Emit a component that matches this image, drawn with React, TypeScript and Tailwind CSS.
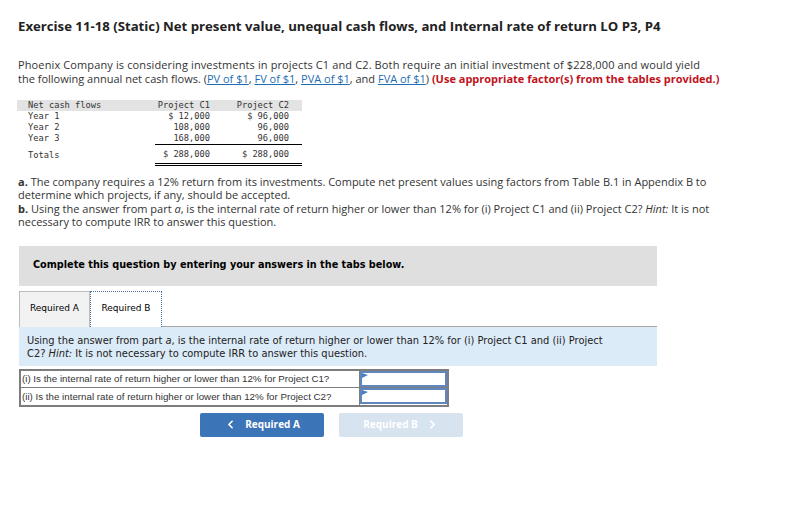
import { ChevronLeft, ChevronRight } from 'lucide-react';

const rows = [
  { label: 'Year 1', c1: '$ 12,000', c2: '$ 96,000' },
  { label: 'Year 2', c1: '108,000', c2: '96,000' },
  { label: 'Year 3', c1: '168,000', c2: '96,000' },
];

const questions = [
  '(i) Is the internal rate of return higher or lower than 12% for Project C1?',
  '(ii) Is the internal rate of return higher or lower than 12% for Project C2?',
];

function Link({ children }: { children: React.ReactNode }) {
  return <span className="text-[#1f6db3] underline">{children}</span>;
}

export default function App() {
  return (
    <div className="w-[801px] h-[517px] bg-white text-[#333] font-['Open_Sans',sans-serif] overflow-hidden">
      <div className="pl-[18px] pt-[16px]">
        <h1 className="text-[13.2px] font-bold text-[#222] leading-[20px] whitespace-nowrap">
          Exercise 11-18 (Static) Net present value, unequal cash flows, and Internal rate of return LO P3, P4
        </h1>

        <p className="mt-[22px] text-[11px] leading-[13.5px] whitespace-nowrap">
          <span className="tracking-[0.12px]">
            Phoenix Company is considering investments in projects C1 and C2. Both require an initial investment of $228,000 and would yield
          </span>
          <br />
          the following annual net cash flows. (<Link>PV of $1</Link>, <Link>FV of $1</Link>, <Link>PVA of $1</Link>, and{' '}
          <Link>FVA of $1</Link>) <span className="font-bold text-[#c0121b]">(Use appropriate factor(s) from the tables provided.)</span>
        </p>

        <table className="mt-[15px] -ml-px font-['DejaVu_Sans_Mono',monospace] text-[8.7px] leading-[11px] text-[#333] border-collapse">
          <thead>
            <tr className="bg-[#e3e3e3]">
              <th className="w-[138px] pl-[11px] text-left font-normal">Net cash flows</th>
              <th className="w-[57px] text-right font-normal pr-[2px]">Project C1</th>
              <th className="w-[20px]"></th>
              <th className="w-[70px] pr-[13px] text-right font-normal">Project C2</th>
            </tr>
          </thead>
          <tbody>
            {rows.map((r, i) => (
              <tr key={r.label}>
                <td className="pl-[11px]">{r.label}</td>
                <td className={`text-right pr-[2px] ${i === 2 ? 'border-b border-black' : ''}`}>{r.c1}</td>
                <td className={i === 2 ? 'border-b border-black' : ''}></td>
                <td className={`text-right pr-[13px] ${i === 2 ? 'border-b border-black' : ''}`}>{r.c2}</td>
              </tr>
            ))}
            <tr>
              <td className="pl-[11px] pt-[4px] pb-[3px]">Totals</td>
              <td className="text-right pr-[2px] pt-[4px] pb-[3px] border-b-[3px] border-double border-black">$ 288,000</td>
              <td className="border-b-[3px] border-double border-black"></td>
              <td className="text-right pr-[13px] pt-[4px] pb-[3px] border-b-[3px] border-double border-black">$ 288,000</td>
            </tr>
          </tbody>
        </table>

        <div className="mt-[9px] text-[11px] leading-[13.4px] whitespace-nowrap">
          <p>
            <span className="font-bold">a.</span> The company requires a 12% return from its investments. Compute net present values using factors from Table B.1 in Appendix B to
            <br />
            determine which projects, if any, should be accepted.
          </p>
          <p>
            <span className="font-bold">b.</span> Using the answer from part <i>a</i>, is the internal rate of return higher or lower than 12% for (i) Project C1 and (ii) Project C2? <i>Hint:</i> It is not
            <br />
            necessary to compute IRR to answer this question.
          </p>
        </div>
      </div>

      <div className="ml-[19px] mt-[17px] w-[638px] h-[40px] bg-[#dfdfdf] flex items-center pl-[14px]">
        <span className="font-['DejaVu_Sans',sans-serif] font-bold text-[9.7px] text-black">
          Complete this question by entering your answers in the tabs below.
        </span>
      </div>

      <div className="ml-[19px] mt-[5px] w-[638px]">
        <div className="flex items-end h-[36px] font-['DejaVu_Sans',sans-serif] text-[9px] text-black">
          <div className="w-[71px] h-[36px] bg-[#f2f2f2] border border-b-0 border-[#bdbdbd] flex items-center justify-center">
            Required A
          </div>
          <div className="w-[72px] h-[36px] bg-white border border-dotted border-b-0 border-[#4a6fa5] flex items-center justify-center">
            Required B
          </div>
          <div className="flex-1 border-b border-[#a6a6a6]"></div>
        </div>

        <div className="bg-[#dcebf8] h-[39px] px-[8px] pt-[7px] font-['DejaVu_Sans',sans-serif] text-[9.9px] leading-[13px] text-[#222] whitespace-nowrap">
          Using the answer from part <i>a</i>, is the internal rate of return higher or lower than 12% for (i) Project C1 and (ii) Project
          <br />
          C2? <i>Hint:</i> It is not necessary to compute IRR to answer this question.
        </div>

        <table className="mt-[3px] border-collapse border-2 border-[#7d7d7d] font-['Liberation_Sans',sans-serif] text-[9.75px] text-[#333]">
          <tbody>
            {questions.map((q) => (
              <tr key={q} className="h-[18px]">
                <td className="w-[339px] border border-[#7d7d7d] pl-[1px] leading-[15px] whitespace-nowrap">{q}</td>
                <td className="w-[89px] border border-[#7d7d7d] p-0">
                  <div className="relative h-[16px] border-2 border-[#5f86bd] bg-white">
                    <svg className="absolute left-0 top-0" width="6" height="5" viewBox="0 0 6 5">
                      <polygon points="0,0 6,2 0,5" fill="#4a7fc4" />
                    </svg>
                  </div>
                </td>
              </tr>
            ))}
          </tbody>
        </table>

        <div className="mt-[6px] flex gap-[15px] ml-[181px] font-['Open_Sans',sans-serif] text-[10px] font-bold text-white">
          <div className="w-[124px] h-[24px] rounded-[2px] bg-[#3b74b7] flex items-center justify-center gap-[8px]">
            <ChevronLeft size={13} strokeWidth={3} />
            <span>Required A</span>
          </div>
          <div className="w-[124px] h-[24px] rounded-[2px] bg-[#d8e3f0] flex items-center justify-center gap-[8px]">
            <span>Required B</span>
            <ChevronRight size={13} strokeWidth={3} />
          </div>
        </div>
      </div>
    </div>
  );
}
